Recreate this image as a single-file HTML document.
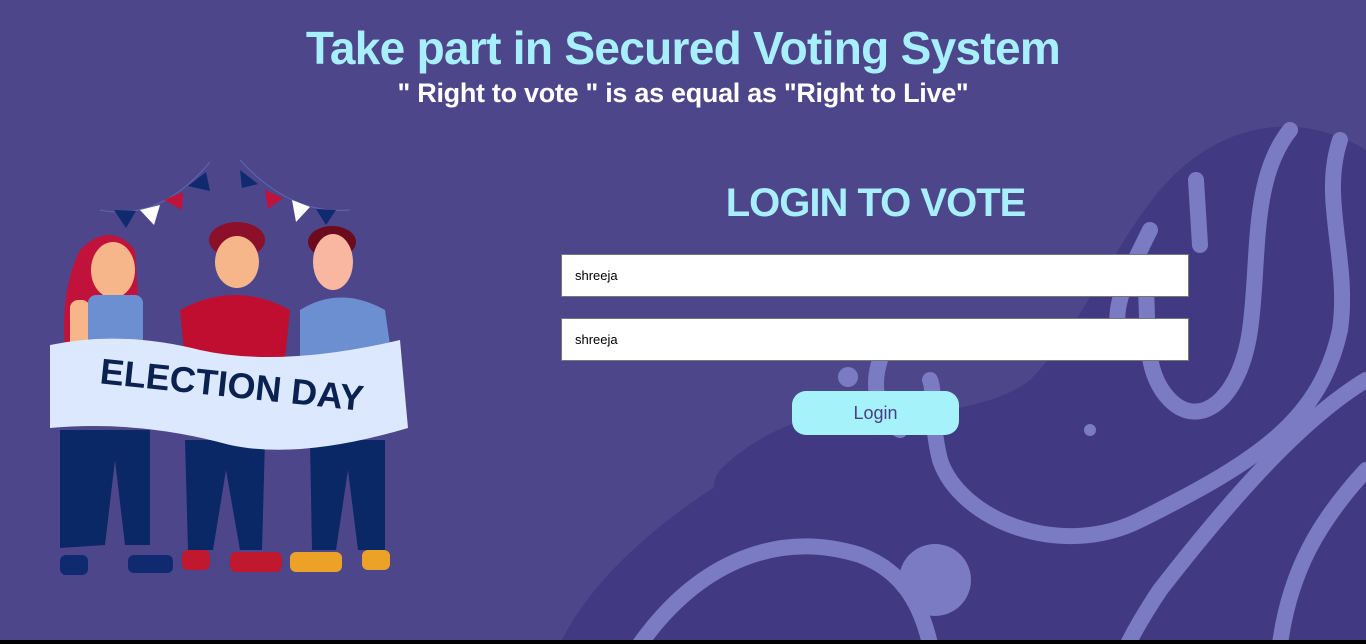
<!DOCTYPE html>
<html><head><meta charset="utf-8"><style>
html,body{margin:0;padding:0}
body{width:1366px;height:644px;overflow:hidden;background:#4e468a;position:relative;font-family:"Liberation Sans",sans-serif}
svg.bg{position:absolute;left:0;top:0}
h1{position:absolute;top:21px;left:0;width:1366px;text-align:center;margin:0;font-size:46px;font-weight:bold;color:#a6effb;letter-spacing:-0.7px}
h2{position:absolute;top:78px;left:0;width:1366px;text-align:center;margin:0;font-size:27px;font-weight:bold;color:#fff;letter-spacing:-0.3px}
h3{position:absolute;top:181px;left:562px;width:627px;text-align:center;margin:0;font-size:40px;font-weight:bold;color:#a6effb;letter-spacing:-1px}
.in{position:absolute;left:561px;width:628px;height:43px;background:#fff;border:1px solid #777;box-sizing:border-box;font-size:13px;line-height:41px;padding-left:13px;color:#000}
.btn{position:absolute;left:792px;top:391px;width:167px;height:44px;background:#a6f2fb;border-radius:14px;text-align:center;line-height:44px;font-size:18px;color:#4a3f86}
.bar{position:absolute;left:0;top:640px;width:1366px;height:4px;background:#000}
</style></head><body>
<svg class="bg" width="1366" height="644" viewBox="0 0 1366 644">
<path d="M1366 150 C1300 110 1220 120 1160 190 C1110 250 1080 330 1030 380 C980 420 870 410 780 450 C700 490 600 560 560 644 L1366 644 Z" fill="#413a82"/>
<path d="M720 470 C760 430 830 400 880 420 C860 480 820 500 770 500 C730 510 700 500 720 470Z" fill="#413a82"/>
<g fill="none" stroke="#7a7bc3" stroke-width="16" stroke-linecap="round">
<path d="M1290 130 C1250 180 1260 260 1250 330 C1240 400 1200 430 1170 400 C1140 370 1150 320 1145 280"/>
<path d="M1340 140 C1320 200 1350 260 1340 330 C1320 420 1260 460 1140 520 C1060 560 960 520 940 460 C930 420 935 390 930 380"/>
<path d="M1196 180 L1200 245"/>
<path d="M1150 230 C1130 270 1110 310 1120 330"/>
<path d="M1366 380 C1300 420 1230 500 1160 590 C1140 620 1130 640 1128 644"/>
<path d="M1366 470 C1320 520 1290 570 1280 644"/>
<path d="M640 644 C700 560 780 530 860 555 C900 570 920 600 930 644"/>
<path d="M880 360 C870 390 880 420 900 430"/>
</g>
<circle cx="935" cy="580" r="36" fill="#7a7bc3"/>
<circle cx="1090" cy="430" r="6" fill="#7a7bc3"/>
<circle cx="848" cy="377" r="10" fill="#7a7bc3"/>
<g>
<path d="M100 210 Q160 222 210 162" stroke="#5a68b0" fill="none"/>
<path d="M240 160 Q290 215 350 210" stroke="#5a68b0" fill="none"/>
<polygon points="114,210 136,211 126,228" fill="#0f2a6e"/>
<polygon points="140,210 160,205 154,225" fill="#fff"/>
<polygon points="164,200 183,192 182,210" fill="#c0123a"/>
<polygon points="188,186 206,172 210,191" fill="#0f2a6e"/>
<polygon points="240,170 258,184 242,188" fill="#0f2a6e"/>
<polygon points="265,190 283,198 268,209" fill="#c0123a"/>
<polygon points="292,200 310,207 296,222" fill="#fff"/>
<polygon points="316,209 336,210 326,225" fill="#0f2a6e"/>
<path d="M80 250 Q110 220 135 250 L140 330 L65 350 Q60 290 80 250Z" fill="#c0123a"/>
<ellipse cx="113" cy="270" rx="22" ry="28" fill="#f7b58a"/>
<rect x="70" y="300" width="20" height="50" rx="8" fill="#f7b58a"/>
<rect x="88" y="295" width="55" height="60" rx="8" fill="#6b8fd0"/>
<path d="M60 430 L150 430 L150 545 L125 545 L115 460 L105 545 L60 548Z" fill="#0a2766"/>
<rect x="60" y="555" width="28" height="20" rx="6" fill="#0f2a6e"/>
<rect x="128" y="555" width="45" height="18" rx="6" fill="#0f2a6e"/>
<ellipse cx="237" cy="240" rx="28" ry="18" fill="#8c1029"/>
<ellipse cx="237" cy="262" rx="22" ry="26" fill="#f7b58a"/>
<path d="M180 310 Q235 280 290 310 L285 360 L185 360Z" fill="#c00e30"/>
<path d="M185 440 L265 440 L262 550 L240 550 L226 470 L213 550 L188 550Z" fill="#0a2766"/>
<rect x="182" y="550" width="28" height="20" rx="6" fill="#c0182f"/>
<rect x="230" y="552" width="52" height="20" rx="6" fill="#c0182f"/>
<ellipse cx="332" cy="242" rx="24" ry="16" fill="#6b0b1d"/>
<ellipse cx="333" cy="262" rx="20" ry="28" fill="#f9b7a2"/>
<path d="M300 310 Q340 285 385 310 L390 345 L300 360Z" fill="#6b8fd0"/>
<path d="M310 440 L385 440 L385 550 L358 550 L348 470 L336 550 L312 550Z" fill="#0a2766"/>
<rect x="290" y="552" width="52" height="20" rx="6" fill="#eba226"/>
<rect x="362" y="550" width="28" height="20" rx="6" fill="#eba226"/>
<path d="M50 345 Q120 330 200 350 Q280 368 400 340 L408 428 Q300 460 230 445 Q140 420 50 428Z" fill="#dce8fd"/>
<text x="98" y="397" font-family="Liberation Sans" font-weight="bold" font-size="36" fill="#0b2150" transform="rotate(6 230 400)">ELECTION DAY</text>
</g>
</svg>
<h1>Take part in Secured Voting System</h1>
<h2>" Right to vote " is as equal as "Right to Live"</h2>
<h3>LOGIN TO VOTE</h3>
<div class="in" style="top:254px">shreeja</div>
<div class="in" style="top:318px">shreeja</div>
<div class="btn">Login</div>
<div class="bar"></div>
</body></html>
